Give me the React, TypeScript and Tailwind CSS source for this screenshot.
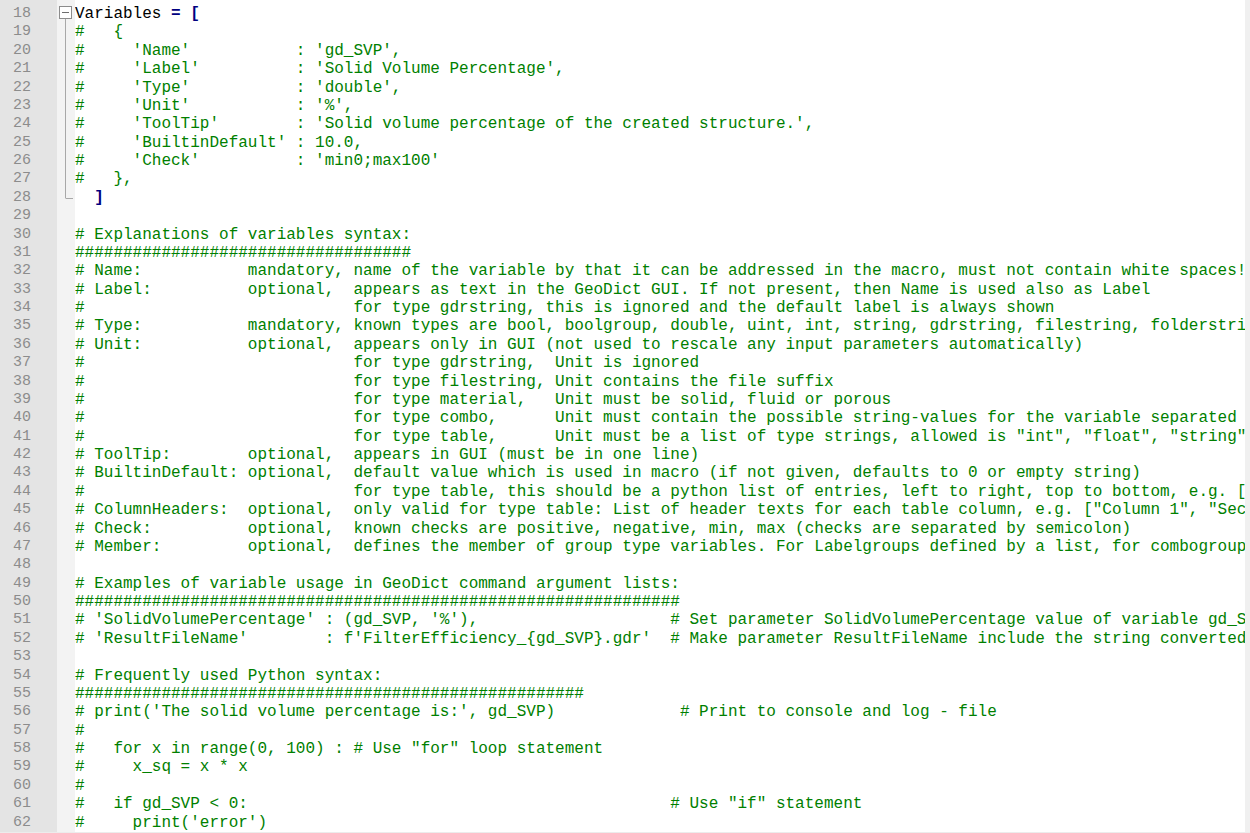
import React from 'react';

const pad = (s: string, col: number) => s.padEnd(col, ' ');

const hashes = (n: number) => '#'.repeat(n);

// comment lines from 19 to 62 (lines 18 and 28 are real code)
const comment: Record<number, string> = {
  19: '#   {',
  20: pad("#     'Name'", 23) + ": 'gd_SVP',",
  21: pad("#     'Label'", 23) + ": 'Solid Volume Percentage',",
  22: pad("#     'Type'", 23) + ": 'double',",
  23: pad("#     'Unit'", 23) + ": '%',",
  24: pad("#     'ToolTip'", 23) + ": 'Solid volume percentage of the created structure.',",
  25: pad("#     'BuiltinDefault'", 23) + ': 10.0,',
  26: pad("#     'Check'", 23) + ": 'min0;max100'",
  27: '#   },',
  30: '# Explanations of variables syntax:',
  31: hashes(35),
  32: pad('# Name:', 18) + 'mandatory, name of the variable by that it can be addressed in the macro, must not contain white spaces!',
  33: pad('# Label:', 18) + 'optional,  appears as text in the GeoDict GUI. If not present, then Name is used also as Label',
  34: pad('#', 29) + 'for type gdrstring, this is ignored and the default label is always shown',
  35: pad('# Type:', 18) + 'mandatory, known types are bool, boolgroup, double, uint, int, string, gdrstring, filestring, folderstring, material, combo, table',
  36: pad('# Unit:', 18) + 'optional,  appears only in GUI (not used to rescale any input parameters automatically)',
  37: pad('#', 29) + 'for type gdrstring,  Unit is ignored',
  38: pad('#', 29) + 'for type filestring, Unit contains the file suffix',
  39: pad('#', 29) + 'for type material,   Unit must be solid, fluid or porous',
  40: pad('#', 29) + 'for type combo,      Unit must contain the possible string-values for the variable separated by semicolon',
  41: pad('#', 29) + 'for type table,      Unit must be a list of type strings, allowed is "int", "float", "string", "bool"',
  42: pad('# ToolTip:', 18) + 'optional,  appears in GUI (must be in one line)',
  43: pad('# BuiltinDefault:', 18) + 'optional,  default value which is used in macro (if not given, defaults to 0 or empty string)',
  44: pad('#', 29) + 'for type table, this should be a python list of entries, left to right, top to bottom, e.g. [[1, 2], [3, 4]]',
  45: pad('# ColumnHeaders:', 18) + 'optional,  only valid for type table: List of header texts for each table column, e.g. ["Column 1", "Second Column"]',
  46: pad('# Check:', 18) + 'optional,  known checks are positive, negative, min, max (checks are separated by semicolon)',
  47: pad('# Member:', 18) + 'optional,  defines the member of group type variables. For Labelgroups defined by a list, for combogroups by a dict',
  49: '# Examples of variable usage in GeoDict command argument lists:',
  50: hashes(63),
  51: pad("# 'SolidVolumePercentage' : (gd_SVP, '%'),", 62) + '# Set parameter SolidVolumePercentage value of variable gd_SVP',
  52: pad("# 'ResultFileName'", 26) + ": f'FilterEfficiency_{gd_SVP}.gdr'  # Make parameter ResultFileName include the string converted value",
  54: '# Frequently used Python syntax:',
  55: hashes(53),
  56: pad("# print('The solid volume percentage is:', gd_SVP)", 63) + '# Print to console and log - file',
  57: '#',
  58: '#   for x in range(0, 100) : # Use "for" loop statement',
  59: '#     x_sq = x * x',
  60: '#',
  61: pad('#   if gd_SVP < 0:', 62) + '# Use "if" statement',
  62: "#     print('error')",
};

const lineNos = Array.from({ length: 45 }, (_, i) => 18 + i);

const CodeLine: React.FC<{ n: number }> = ({ n }) => {
  if (n === 18) {
    return (
      <div className="h-[18.375px]">
        <span className="text-black">Variables </span>
        <span className="font-bold text-[#000080]">=</span>
        <span className="text-black"> </span>
        <span className="font-bold text-[#000080]">[</span>
      </div>
    );
  }
  if (n === 28) {
    return (
      <div className="h-[18.375px]">
        {'  '}
        <span className="font-bold text-[#000080]">]</span>
      </div>
    );
  }
  return <div className="h-[18.375px] text-[#008000]">{comment[n] ?? ''}</div>;
};

const FoldMargin: React.FC = () => (
  <div className="w-[18px] shrink-0 bg-[#f3f3f3]">
    <svg width="18" height="210" viewBox="0 0 18 210">
      <rect x="2.5" y="6.5" width="12" height="12" fill="#ffffff" stroke="#8c8c8c" />
      <line x1="5" y1="12.5" x2="12" y2="12.5" stroke="#6e6e6e" />
      <line x1="8.5" y1="19" x2="8.5" y2="198" stroke="#a8a8a8" />
      <line x1="8.5" y1="198.5" x2="16" y2="198.5" stroke="#a8a8a8" />
    </svg>
  </div>
);

export default function App() {
  return (
    <div className="flex h-[833px] w-[1250px] flex-col overflow-hidden bg-white font-['Liberation_Mono','Courier_New',monospace]">
      <div className="flex min-h-0 flex-1">
        <div className="w-[57px] shrink-0 bg-[#e4e4e4] pt-[5px] pr-[26px] text-right text-[15px] text-[#8c8c8c]">
          {lineNos.map((n) => (
            <div key={n} className="h-[18.375px] leading-[18.375px]">
              {n}
            </div>
          ))}
        </div>
        <FoldMargin />
        <div className="min-w-0 flex-1 overflow-hidden whitespace-pre pt-[5px] text-[16px] leading-[18.375px]">
          {lineNos.map((n) => (
            <CodeLine key={n} n={n} />
          ))}
        </div>
        <div className="w-[5px] shrink-0 bg-[#f0f0f0]" />
      </div>
      <div className="h-[1px] shrink-0 bg-[#ececec]" />
    </div>
  );
}
